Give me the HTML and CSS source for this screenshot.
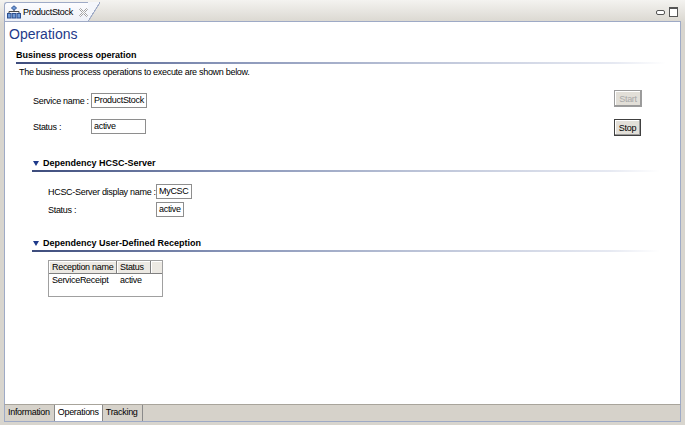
FILE: index.html
```html
<!DOCTYPE html>
<html>
<head>
<meta charset="utf-8">
<link rel="stylesheet" href="styles.css">
</head>
<body>
<div class="window">
  <div class="tabbar">
    <div class="tab">
      <svg class="tab-icon" width="14" height="14" viewBox="0 0 14 14">
        <path d="M2 8 V6.5 H12 V8 M7 5 V6.5" stroke="#4a4a4a" fill="none" stroke-width="1"/>
        <rect x="0.5" y="8.5" width="3.5" height="4.5" fill="#6f9ad6" stroke="#2c4f8f" stroke-width="1"/>
        <rect x="5.25" y="8.5" width="3.5" height="4.5" fill="#6f9ad6" stroke="#2c4f8f" stroke-width="1"/>
        <rect x="10" y="8.5" width="3.5" height="4.5" fill="#6f9ad6" stroke="#2c4f8f" stroke-width="1"/>
        <path d="M7 0.8 L9.6 3 L7 5.2 L4.4 3 Z" fill="#6f9ad6" stroke="#2c4f8f" stroke-width="0.9"/>
      </svg>
      <span class="tab-label">ProductStock</span>
      <svg class="tab-close" width="9" height="9" viewBox="0 0 9 9">
        <path d="M0.5 1.5 L1.5 0.5 L4.5 3.5 L7.5 0.5 L8.5 1.5 L5.5 4.5 L8.5 7.5 L7.5 8.5 L4.5 5.5 L1.5 8.5 L0.5 7.5 L3.5 4.5 Z" fill="#fff" stroke="#8c8c8c" stroke-width="0.8"/>
      </svg>
    </div>
    <div class="tab-tail"></div>
    <div class="win-ctrls">
      <span class="ctrl-min"></span>
      <span class="ctrl-max"></span>
    </div>
  </div>
  <div class="content">
    <h1 class="title">Operations</h1>
    <div class="section">
      <div class="section-head">Business process operation</div>
      <div class="section-rule"></div>
      <p class="desc">The business process operations to execute are shown below.</p>
      <div class="op-grid">
        <div class="op-fields">
          <div class="field-row">
            <span class="lbl w58">Service name :</span>
            <span class="box">ProductStock</span>
          </div>
          <div class="field-row">
            <span class="lbl w58">Status :</span>
            <span class="box wide">active</span>
          </div>
        </div>
        <div class="op-buttons">
          <button class="btn disabled">Start</button>
          <button class="btn">Stop</button>
        </div>
      </div>
    </div>
    <div class="section dep">
      <div class="section-head"><span class="tri"></span>Dependency HCSC-Server</div>
      <div class="section-rule"></div>
      <div class="dep-fields">
        <div class="field-row">
          <span class="lbl w108">HCSC-Server display name :</span>
          <span class="box">MyCSC</span>
        </div>
        <div class="field-row">
          <span class="lbl w108">Status :</span>
          <span class="box">active</span>
        </div>
      </div>
    </div>
    <div class="section dep dep2">
      <div class="section-head"><span class="tri"></span>Dependency User-Defined Reception</div>
      <div class="section-rule"></div>
      <div class="table">
        <div class="thead">
          <span class="th c1">Reception name</span>
          <span class="th c2">Status</span>
          <span class="th c3"></span>
        </div>
        <div class="trow">
          <span class="td c1">ServiceReceipt</span>
          <span class="td c2">active</span>
        </div>
      </div>
    </div>
  </div>
  <div class="bottom-tabs">
    <span class="btab">Information</span>
    <span class="btab active">Operations</span>
    <span class="btab">Tracking</span>
  </div>
</div>
</body>
</html>
```
FILE: styles.css
```css
* { box-sizing: border-box; }
html, body { margin: 0; padding: 0; }
body {
  width: 685px;
  height: 425px;
  background: #ffffff;
  font-family: "Liberation Sans", Arial, sans-serif;
  font-size: 9px;
  letter-spacing: -0.3px;
  color: #000;
  overflow: hidden;
  white-space: nowrap;
}
.window {
  width: 685px;
  height: 425px;
  display: flex;
  flex-direction: column;
  padding: 2px 4px 3px 4px;
  background: linear-gradient(#f4f3f0, #d8d5ce 24px);
}
.tabbar {
  height: 19px;
  display: flex;
  align-items: flex-end;
  flex: none;
}
.tab {
  height: 19px;
  width: 84px;
  display: flex;
  align-items: center;
  padding-left: 2px;
  background: linear-gradient(#fcfcfe, #eef1f8);
  border: 1px solid #9eaac6;
  border-right: none;
  border-bottom: none;
  border-radius: 3px 0 0 0;
}
.tab-icon { flex: none; margin-right: 2px; }
.tab-label { font-size: 9px; color: #000; }
.tab-close { flex: none; margin-left: 6px; }
.tab-tail {
  width: 12px;
  height: 19px;
  background: linear-gradient(to bottom right, #f4f6fb 48%, #9eaac6 49%, #9eaac6 53%, transparent 55%);
}
.win-ctrls {
  margin-left: auto;
  display: flex;
  gap: 4px;
  align-items: center;
  align-self: center;
  padding-right: 3px;
  padding-top: 1px;
}
.ctrl-min {
  width: 9px; height: 5px;
  border: 1px solid #555;
  border-radius: 2px;
  background: #fff;
}
.ctrl-max {
  width: 9px; height: 10px;
  border: 1px solid #555;
  border-top-width: 2px;
  background: #fff;
}
.content {
  flex: 1;
  background: #ffffff;
  border: 1px solid #9eaac6;
  border-bottom: 1px solid #a8a49b;
  padding: 3px 0 0 4px;
}
.title {
  margin: 0;
  font-family: "Liberation Sans", Arial, sans-serif;
  font-weight: normal;
  font-size: 14px;
  letter-spacing: 0;
  color: #1e3a8a;
  height: 19px;
  line-height: 19px;
}
.section { padding-left: 7px; margin-top: 5px; }
.section-head {
  font-weight: bold;
  letter-spacing: 0;
  height: 13px;
  line-height: 13px;
  display: flex;
  align-items: center;
}
.section-rule {
  height: 2px;
  width: 650px;
  background: linear-gradient(to right, #3d4c7c 0%, #8592b6 30%, #b9c1d6 60%, #e6e9f2 92%, rgba(255,255,255,0) 100%);
}
.desc { margin: 2px 0 0 3px; line-height: 12px; }
.op-grid {
  display: flex;
  justify-content: space-between;
  width: 626px;
  margin-top: 12px;
}
.op-fields {
  padding-left: 17px;
  padding-top: 3px;
  display: flex;
  flex-direction: column;
  gap: 11px;
}
.field-row { display: flex; align-items: center; height: 15px; }
.w58 { width: 58px; }
.w108 { width: 108px; }
.box {
  border: 1px solid #8e8e8e;
  height: 15px;
  line-height: 13px;
  padding: 0 2px;
  background: #fff;
}
.box.wide { width: 55px; }
.op-buttons {
  display: flex;
  flex-direction: column;
  gap: 12px;
  align-items: flex-start;
}
.btn {
  font-family: "Liberation Sans", Arial, sans-serif;
  font-size: 9px;
  letter-spacing: -0.3px;
  height: 17px;
  width: 27px;
  padding: 0;
  margin: 0;
  border: 1px solid #404040;
  background: #e2dfd8;
  box-shadow: inset -1px -1px 0 #9a9a9a, inset 1px 1px 0 #fff;
  color: #000;
}
.btn.disabled { color: #a8a8a8; border-color: #9c9c9c; width: 28px; }
.dep { padding-left: 24px; margin-top: 21px; }
.dep .section-rule { width: 628px; margin-left: -1px; }
.tri {
  width: 0; height: 0;
  border-left: 3.5px solid transparent;
  border-right: 3.5px solid transparent;
  border-top: 5px solid #1e3a8a;
  margin-right: 4px;
}
.dep-fields {
  padding-left: 15px;
  margin-top: 12px;
  display: flex;
  flex-direction: column;
  gap: 3px;
}
.dep2 { margin-top: 20px; }
.table {
  margin-left: 15px;
  margin-top: 8px;
  width: 115px;
  height: 37px;
  border: 1px solid #a0a0a0;
  background: #fff;
}
.thead { display: flex; height: 13px; }
.th {
  line-height: 12px;
  padding-left: 3px;
  background: #ece9e3;
  border-right: 1px solid #808080;
  border-bottom: 1px solid #808080;
  box-shadow: inset 1px 1px 0 #fff;
}
.th.c1 { width: 68px; }
.th.c2 { width: 34px; }
.th.c3 { flex: 1; border-right: none; }
.trow { display: flex; height: 12px; line-height: 12px; }
.td { padding-left: 3px; }
.td.c1 { width: 68px; }
.td.c2 { width: 34px; }
.bottom-tabs {
  height: 17px;
  flex: none;
  display: flex;
  background: #d6d2ca;
  border-left: 1px solid #9eaac6;
  border-right: 1px solid #9eaac6;
  border-bottom: 1px solid #9eaac6;
}
.btab {
  line-height: 15px;
  padding: 0 4px 0 3px;
  border-right: 1px solid #8a8a8a;
}
.btab.active { background: #fff; padding: 0 3px; }
```
